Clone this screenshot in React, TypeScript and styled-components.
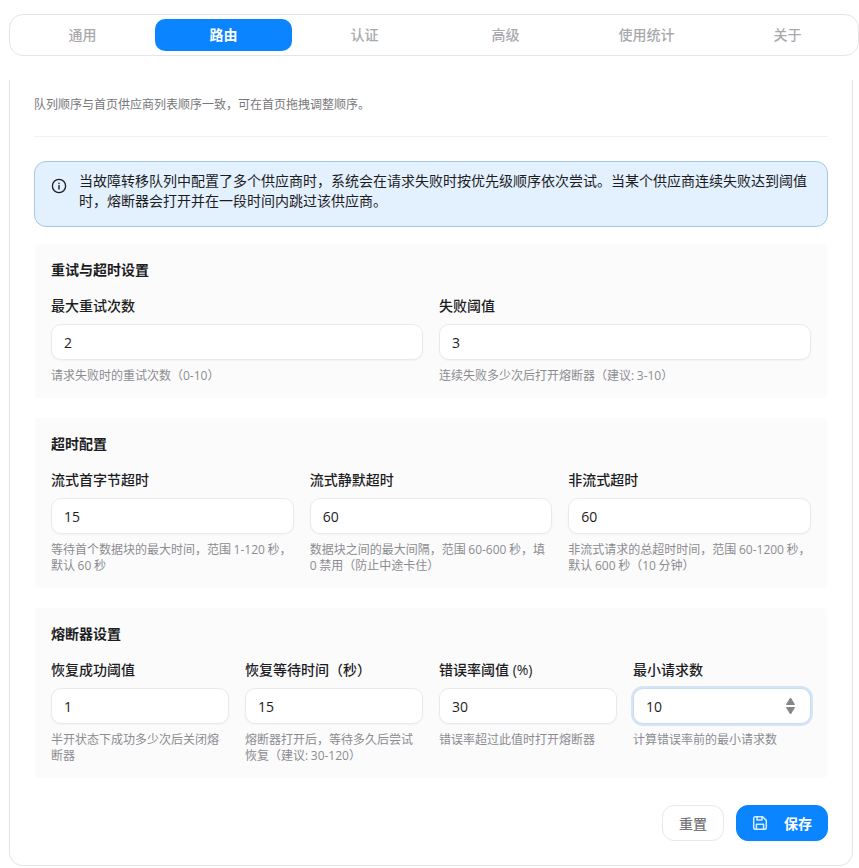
import React from "react";
import styled, { createGlobalStyle } from "styled-components";

const GlobalStyle = createGlobalStyle`
  html, body {
    margin: 0;
    padding: 0;
    background: #fff;
  }
  * {
    box-sizing: border-box;
  }
`;

const Page = styled.div`
  width: 859px;
  height: 868px;
  padding: 14px 0 0 9px;
  overflow: hidden;
  font-family: "Open Sans", "Noto Sans CJK SC", sans-serif;
  color: #1d1d1f;
`;

const TabBar = styled.div`
  display: grid;
  grid-template-columns: repeat(6, 137px);
  gap: 4px;
  width: 850px;
  height: 42px;
  padding: 4px;
  border: 1px solid #e5e5e7;
  border-radius: 14px;
  background: #fff;
`;

const Tab = styled.div<{ $active?: boolean }>`
  display: flex;
  align-items: center;
  justify-content: center;
  padding-bottom: 2px;
  border-radius: 10px;
  font-size: 14px;
  font-weight: ${(p) => (p.$active ? 700 : 500)};
  color: ${(p) => (p.$active ? "#fff" : "#a9a9ad")};
  background: ${(p) => (p.$active ? "#0a84ff" : "transparent")};
`;

const Panel = styled.div`
  width: 844px;
  height: 786px;
  margin-top: 24px;
  padding: 15px 24px 0;
  border: 1px solid #e5e5e7;
  border-top: none;
  border-radius: 0 0 14px 14px;
`;

const Intro = styled.p`
  margin: 0;
  padding-bottom: 21px;
  font-size: 12px;
  line-height: 20px;
  color: #77777b;
  border-bottom: 1px solid #f2f2f4;
`;

const Notice = styled.div`
  display: flex;
  align-items: flex-start;
  gap: 12px;
  width: 794px;
  height: 66px;
  margin-top: 24px;
  padding: 9px 16px 0;
  border: 1px solid #a3c8e4;
  border-radius: 12px;
  background: #e3f0fd;
  font-size: 14px;
  line-height: 20px;
  color: #1d1d1f;

  svg {
    flex: none;
    margin-top: 7px;
  }
`;

const Sections = styled.div`
  display: flex;
  flex-direction: column;
  gap: 20px;
  margin: 17px 0 0 1px;
`;

const Section = styled.section`
  width: 792px;
  padding: 16px 16px 14px;
  border-radius: 4px;
  background: #fbfbfc;
`;

const SectionTitle = styled.h3`
  margin: 0 0 16px;
  font-size: 14px;
  font-weight: 700;
  line-height: 20px;
`;

const Fields = styled.div<{ $cols: number }>`
  display: grid;
  grid-template-columns: repeat(${(p) => p.$cols}, 1fr);
  gap: 16px;
`;

const Field = styled.div`
  display: flex;
  flex-direction: column;
  min-width: 0;
`;

const Label = styled.label`
  margin-bottom: 8px;
  font-size: 14px;
  font-weight: 500;
  line-height: 20px;
`;

const InputWrap = styled.div`
  position: relative;
`;

const Input = styled.input<{ $focused?: boolean }>`
  display: block;
  width: 100%;
  height: 36px;
  padding: 0 12px;
  border: 1px solid ${(p) => (p.$focused ? "#c9dcf0" : "#eaeaec")};
  border-radius: 10px;
  outline: none;
  background: #fff;
  font-family: inherit;
  font-size: 14px;
  color: #1d1d1f;
  box-shadow: ${(p) =>
    p.$focused ? "0 0 0 2px #d5e5f5" : "0 1px 2px rgba(0, 0, 0, 0.04)"};
`;

const Spinner = styled.svg`
  position: absolute;
  top: 9px;
  right: 15px;
`;

const Hint = styled.div`
  margin-top: 8px;
  font-size: 12px;
  line-height: 16px;
  word-spacing: -0.5px;
  color: #8c8c90;
`;

const Actions = styled.div`
  display: flex;
  justify-content: flex-end;
  gap: 12px;
  width: 794px;
  margin-top: 27px;
`;

const Button = styled.button<{ $primary?: boolean }>`
  display: flex;
  align-items: center;
  justify-content: center;
  gap: 16px;
  height: 36px;
  width: ${(p) => (p.$primary ? "92px" : "62px")};
  padding: 0;
  border: 1px solid ${(p) => (p.$primary ? "#0a84ff" : "#e8e8ea")};
  border-radius: 12px;
  background: ${(p) => (p.$primary ? "#0a84ff" : "#fff")};
  color: ${(p) => (p.$primary ? "#fff" : "#77777b")};
  font-family: inherit;
  font-size: 14px;
  font-weight: ${(p) => (p.$primary ? 700 : 500)};
`;

type FieldData = {
  label: string;
  value: string;
  hint: string;
  focused?: boolean;
};

type SectionData = {
  title: string;
  fields: FieldData[];
};

const tabs = ["通用", "路由", "认证", "高级", "使用统计", "关于"];

const sections: SectionData[] = [
  {
    title: "重试与超时设置",
    fields: [
      { label: "最大重试次数", value: "2", hint: "请求失败时的重试次数（0-10）" },
      { label: "失败阈值", value: "3", hint: "连续失败多少次后打开熔断器（建议: 3-10）" },
    ],
  },
  {
    title: "超时配置",
    fields: [
      {
        label: "流式首字节超时",
        value: "15",
        hint: "等待首个数据块的最大时间，范围 1-120 秒，默认 60 秒",
      },
      {
        label: "流式静默超时",
        value: "60",
        hint: "数据块之间的最大间隔，范围 60-600 秒，填 0 禁用（防止中途卡住）",
      },
      {
        label: "非流式超时",
        value: "60",
        hint: "非流式请求的总超时时间，范围 60-1200 秒，默认 600 秒（10 分钟）",
      },
    ],
  },
  {
    title: "熔断器设置",
    fields: [
      { label: "恢复成功阈值", value: "1", hint: "半开状态下成功多少次后关闭熔断器" },
      {
        label: "恢复等待时间（秒）",
        value: "15",
        hint: "熔断器打开后，等待多久后尝试恢复（建议: 30-120）",
      },
      { label: "错误率阈值 (%)", value: "30", hint: "错误率超过此值时打开熔断器" },
      { label: "最小请求数", value: "10", hint: "计算错误率前的最小请求数", focused: true },
    ],
  },
];

const InfoIcon = () => (
  <svg width="16" height="16" viewBox="0 0 16 16" fill="none">
    <circle cx="8" cy="8" r="6.6" stroke="#1d1d1f" strokeWidth="1.3" />
    <circle cx="8" cy="5.2" r="0.8" fill="#1d1d1f" />
    <path d="M8 7.4v3.6" stroke="#1d1d1f" strokeWidth="1.4" strokeLinecap="round" />
  </svg>
);

const SaveIcon = () => (
  <svg width="16" height="16" viewBox="0 0 16 16" fill="none" stroke="#d8ecff" strokeWidth="1.5" strokeLinejoin="round">
    <path d="M1.7 3.2a1.5 1.5 0 0 1 1.5-1.5h7.4l3.7 3.7v7.4a1.5 1.5 0 0 1-1.5 1.5H3.2a1.5 1.5 0 0 1-1.5-1.5z" />
    <path d="M5 1.7v3.4h5V1.7M4.4 14.3V9.2h7.2v5.1" />
  </svg>
);

const App: React.FC = () => {
  return (
    <Page>
      <GlobalStyle />
      <TabBar>
        {tabs.map((t) => (
          <Tab key={t} $active={t === "路由"}>
            {t}
          </Tab>
        ))}
      </TabBar>
      <Panel>
        <Intro>队列顺序与首页供应商列表顺序一致，可在首页拖拽调整顺序。</Intro>
        <Notice>
          <InfoIcon />
          <span>
            当故障转移队列中配置了多个供应商时，系统会在请求失败时按优先级顺序依次尝试。当某个供应商连续失败达到阈值时，熔断器会打开并在一段时间内跳过该供应商。
          </span>
        </Notice>
        <Sections>
          {sections.map((s) => (
            <Section key={s.title}>
              <SectionTitle>{s.title}</SectionTitle>
              <Fields $cols={s.fields.length}>
                {s.fields.map((f) => (
                  <Field key={f.label}>
                    <Label>{f.label}</Label>
                    <InputWrap>
                      <Input defaultValue={f.value} $focused={f.focused} />
                      {f.focused && (
                        <Spinner width="11" height="18" viewBox="0 0 11 18" fill="#85858a" stroke="#85858a" strokeLinejoin="round">
                          <path d="M5.5 1l4 6.5h-8zM5.5 17l-4-6.5h8z" />
                        </Spinner>
                      )}
                    </InputWrap>
                    <Hint>{f.hint}</Hint>
                  </Field>
                ))}
              </Fields>
            </Section>
          ))}
        </Sections>
        <Actions>
          <Button>重置</Button>
          <Button $primary>
            <SaveIcon />
            保存
          </Button>
        </Actions>
      </Panel>
    </Page>
  );
};

export default App;
